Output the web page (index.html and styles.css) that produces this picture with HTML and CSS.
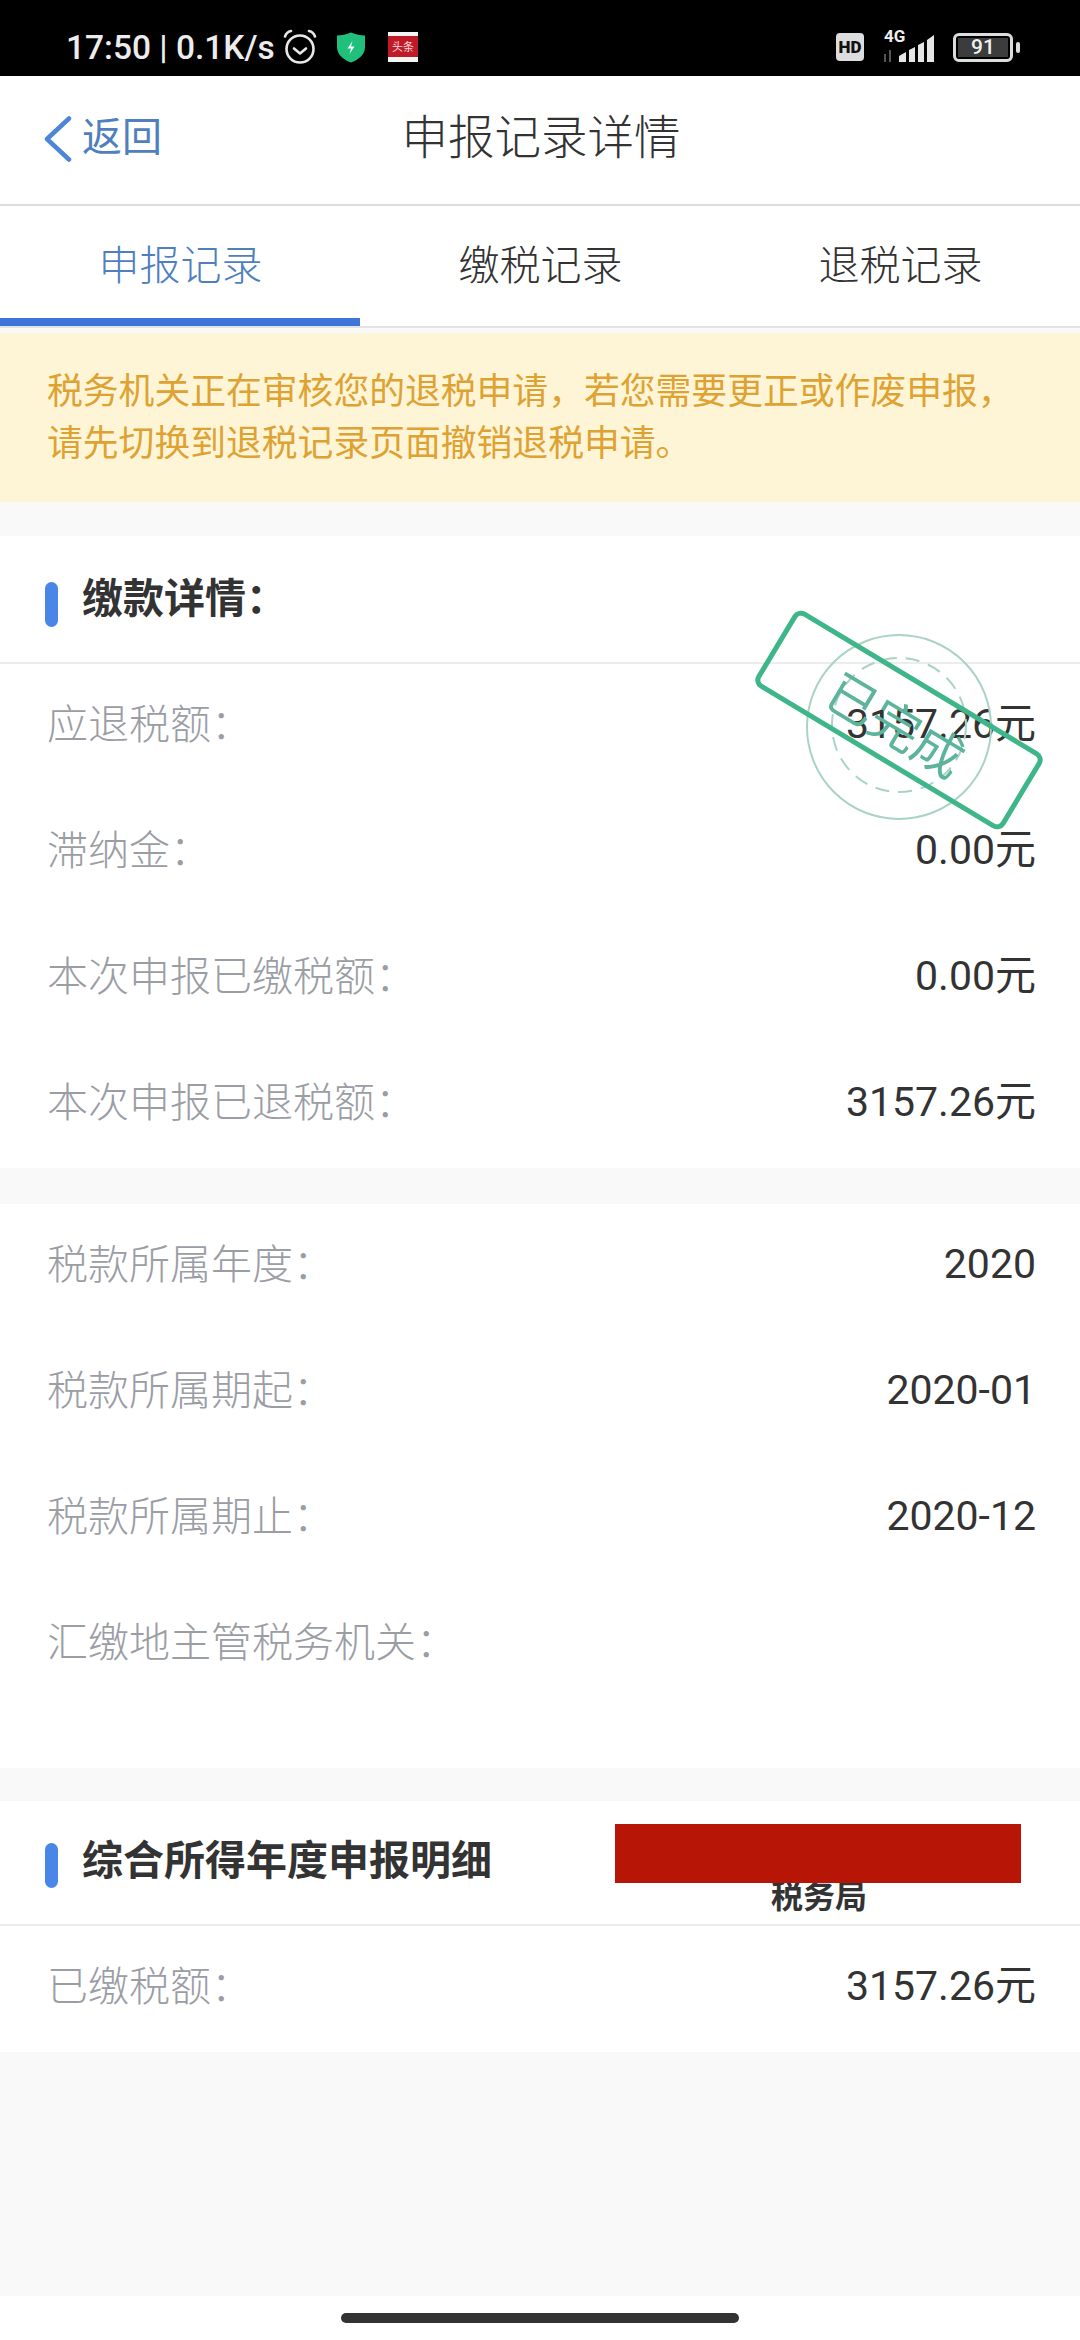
FILE: index.html
```html
<!DOCTYPE html>
<html lang="zh-CN">

<head>
  <meta charset="UTF-8">
  <title>申报记录详情</title>
  <link rel="stylesheet" href="styles.css">
</head>

<body>

  <div class="status-bar">
    <div class="status-left">
      <span class="status-text">17:50 | 0.1K/s</span>
      <svg class="icon-alarm" width="34" height="36" viewBox="0 0 34 36" fill="none" stroke="#e8e8e8" stroke-width="2.6" stroke-linecap="round" stroke-linejoin="round">
        <circle cx="17" cy="20" r="13.5"/>
        <path d="M11 19.5l6 5 6-5"/>
        <path d="M2 7.5Q3.5 3 8 2"/>
        <path d="M32 7.5Q30.500 3 26 2"/>
      </svg>
      <svg class="icon-shield" width="30" height="31" viewBox="0 0 30 31">
        <path d="M15 0.5C20 2.500 24 3.500 29 3.500V15C29 23 22 28 15 30.500C8 28 1 23 1 15V3.500C6 3.500 10 2.500 15 0.500Z" fill="#20c07c"/>
        <path d="M16.500 9L11.500 16.500H15L13.500 22L18.500 14.500H15Z" fill="#eafff5"/>
      </svg>
      <svg class="icon-news" width="30" height="30" viewBox="0 0 30 30">
        <rect width="30" height="30" fill="#f4f4f4"/>
        <rect y="4" width="30" height="21" fill="#c01a28"/>
        <text x="15" y="19" font-size="11" font-family="Noto Sans CJK SC" fill="#ffd9d9" text-anchor="middle">头条</text>
      </svg>
    </div>
    <div class="status-right">
      <span class="hd-badge">HD</span>
      <div class="signal">
        <span class="signal-label">4G</span>
        <svg width="56" height="30" viewBox="0 0 56 30" fill="#e6e6e6">
          <path d="M2 22h2v8H2zM7 18h2v12H7z" fill="#555"/>
          <path d="M17 24l7-4v10h-7zM27 18l6-3v15h-6zM36 13l6-3v20h-6zM45 8l7-5v27h-7z"/>
        </svg>
      </div>
      <div class="battery">
        <div class="battery-body"><span class="battery-level">91</span></div>
        <span class="battery-nub"></span>
      </div>
    </div>
  </div>

  <div class="nav-bar">
    <a class="back">
      <svg width="28" height="46" viewBox="0 0 28 46" fill="none" stroke="#4d86d8" stroke-width="4.500" stroke-linecap="round" stroke-linejoin="round">
        <path d="M25 2.500L3 23l22 20.500"/>
      </svg>
      <span>返回</span>
    </a>
    <div class="nav-title">申报记录详情</div>
  </div>

  <div class="tabs">
    <div class="tab active">申报记录</div>
    <div class="tab">缴税记录</div>
    <div class="tab">退税记录</div>
  </div>

  <div class="notice">税务机关正在审核您的退税申请，若您需要更正或作废申报，<br>请先切换到退税记录页面撤销退税申请。</div>

  <div class="content">

    <section class="card">
      <h2 class="card-head">缴款详情：</h2>
      <div class="rows">
        <div class="row"><span class="label">应退税额：</span><span class="value">3157.26元</span></div>
        <div class="row"><span class="label">滞纳金：</span><span class="value">0.00元</span></div>
        <div class="row"><span class="label">本次申报已缴税额：</span><span class="value">0.00元</span></div>
        <div class="row"><span class="label">本次申报已退税额：</span><span class="value">3157.26元</span></div>
      </div>
      <svg class="stamp" width="320" height="240" viewBox="0 0 320 240" fill="none">
        <circle cx="160" cy="127" r="92" stroke="#a9d3c3" stroke-width="2"/>
        <circle cx="160" cy="125" r="67" stroke="#a9d3c3" stroke-width="2" stroke-dasharray="14 9"/>
        <g transform="rotate(31 160 120)">
          <rect x="17.500" y="78" width="285" height="84" rx="7" stroke="#3fb58a" stroke-width="5"/>
          <text x="160" y="145" font-size="50" font-family="Noto Sans CJK SC" fill="#5cb59b" text-anchor="middle">已完成</text>
        </g>
      </svg>
    </section>

    <section class="card card-period">
      <div class="rows">
        <div class="row"><span class="label">税款所属年度：</span><span class="value">2020</span></div>
        <div class="row"><span class="label">税款所属期起：</span><span class="value">2020-01</span></div>
        <div class="row"><span class="label">税款所属期止：</span><span class="value">2020-12</span></div>
        <div class="row"><span class="label">汇缴地主管税务机关：</span><span class="value"></span></div>
      </div>
    </section>

    <section class="card">
      <h2 class="card-head card-head-short">综合所得年度申报明细</h2>
      <div class="rows">
        <div class="row"><span class="label">已缴税额：</span><span class="value">3157.26元</span></div>
      </div>
      <div class="redact-tail">税务局</div>
      <div class="redact"></div>
    </section>

  </div>

  <div class="home-bar"><span class="home-handle"></span></div>

</body>

</html>
```

FILE: styles.css
```css
* {
  box-sizing: border-box;
}

body {
  margin: 0;
  width: 1080px;
  height: 2340px;
  overflow: hidden;
  display: flex;
  flex-direction: column;
  background-color: #f9f9f9;
  color: #333;
  font-family: "Noto Sans CJK SC", "Noto Sans", sans-serif;
}

/* status bar */
.status-bar {
  height: 76px;
  flex: none;
  display: flex;
  justify-content: space-between;
  align-items: center;
  padding: 18px 60px 0 66px;
  background-color: #000;
}

.status-left,
.status-right {
  display: flex;
  align-items: center;
}

.status-text {
  color: #ececec;
  font-family: Roboto, sans-serif;
  font-size: 33.5px;
  font-weight: 500;
  white-space: nowrap;
}

.icon-alarm {
  margin-left: 8px;
}

.icon-shield {
  margin-left: 19px;
}

.icon-news {
  margin-left: 22px;
}

.hd-badge {
  width: 28px;
  height: 28px;
  border-radius: 4px;
  background-color: #ddd;
  color: #111;
  font-family: Roboto, sans-serif;
  font-size: 17px;
  font-weight: 900;
  line-height: 28px;
  text-align: center;
}

.signal {
  position: relative;
  margin-left: 18px;
}

.signal svg {
  display: block;
}

.signal-label {
  position: absolute;
  left: 2px;
  top: -3px;
  color: #eee;
  font-family: Roboto, sans-serif;
  font-size: 17px;
  font-weight: 700;
  line-height: 15px;
}

.battery {
  display: flex;
  align-items: center;
  margin-left: 15px;
}

.battery-body {
  width: 60px;
  height: 29px;
  padding: 2px;
  border: 3px solid #ddd;
  border-radius: 6px;
}

.battery-level {
  display: block;
  height: 100%;
  background-color: #3c3c3c;
  color: #f0f0f0;
  font-family: Roboto, sans-serif;
  font-size: 21px;
  font-weight: 500;
  line-height: 19px;
  text-align: center;
}

.battery-nub {
  width: 4px;
  height: 11px;
  margin-left: 3px;
  border-radius: 2px;
  background-color: #ddd;
}

/* nav */
.nav-bar {
  height: 130px;
  flex: none;
  display: grid;
  grid-template-columns: 1fr auto 1fr;
  align-items: center;
  padding: 0 0 13px 44px;
  background-color: #fff;
  border-bottom: 2px solid #ddd;
}

.back {
  display: flex;
  align-items: center;
  gap: 10px;
  color: #4f7fbe;
  font-size: 40px;
}

.back svg {
  margin-top: 11px;
}

.nav-title {
  margin-left: -42px;
  font-size: 46.5px;
  font-weight: 300;
}

/* tabs */
.tabs {
  height: 122px;
  flex: none;
  display: grid;
  grid-template-columns: repeat(3, 360px);
  background-color: #fff;
  border-bottom: 2px solid #e4e4e4;
}

.tab {
  display: flex;
  align-items: center;
  justify-content: center;
  padding: 0 0 8px 1px;
  font-size: 41px;
  font-weight: 300;
}

.tab.active {
  color: #4f7fbe;
  box-shadow: inset 0 -8px 0 #3f74d8;
}

/* notice */
.notice {
  height: 169px;
  flex: none;
  margin-top: 5px;
  padding: 29px 30px 0 47px;
  background-color: #fef5d6;
  color: #dea233;
  font-size: 35.8px;
  line-height: 52px;
  white-space: nowrap;
}

/* cards */
.content {
  flex: 1;
  padding-top: 34px;
  background-color: #f9f9f9;
}

.card {
  position: relative;
  margin-bottom: 36px;
  background-color: #fff;
}

.card-period {
  margin-bottom: 33px;
  padding-bottom: 66px;
}

.card-head {
  position: relative;
  height: 128px;
  margin: 0;
  padding: 27px 0 0 82px;
  border-bottom: 2px solid #ececec;
  color: #333;
  font-size: 41px;
  font-weight: 700;
  line-height: 64px;
}

.card-head::before {
  content: "";
  position: absolute;
  left: 45px;
  top: 46px;
  width: 13px;
  height: 45px;
  border-radius: 7px;
  background-color: #4a86e8;
}

.card-head-short {
  height: 125px;
  padding-top: 24px;
}

.card-head-short::before {
  top: 42px;
}

.rows {
  display: flex;
  flex-direction: column;
  gap: 6px;
  padding-bottom: 6px;
}

.card-period .rows {
  padding-bottom: 0;
}

.row {
  height: 120px;
  display: flex;
  justify-content: space-between;
  align-items: center;
  padding: 0 44px 6px 47px;
}

.label {
  color: #9b9da5;
  font-size: 41px;
  font-weight: 300;
}

.value {
  padding-top: 6px;
  color: #333;
  font-family: Roboto, "Noto Sans CJK SC", sans-serif;
  font-size: 41px;
  line-height: 60px;
}

/* overlays */
.stamp {
  position: absolute;
  left: 739px;
  top: 64px;
  pointer-events: none;
}

.redact {
  position: absolute;
  left: 615px;
  top: 23px;
  width: 406px;
  height: 59px;
  background-color: #b71505;
}

.redact-tail {
  position: absolute;
  left: 771px;
  top: 70px;
  color: #333;
  font-size: 32px;
  font-weight: 700;
  line-height: 46px;
}

/* gesture bar */
.home-bar {
  height: 44px;
  flex: none;
  display: flex;
  justify-content: center;
  padding-top: 17px;
  background-color: #fff;
}

.home-handle {
  width: 398px;
  height: 10px;
  border-radius: 5px;
  background-color: #333;
}
```
